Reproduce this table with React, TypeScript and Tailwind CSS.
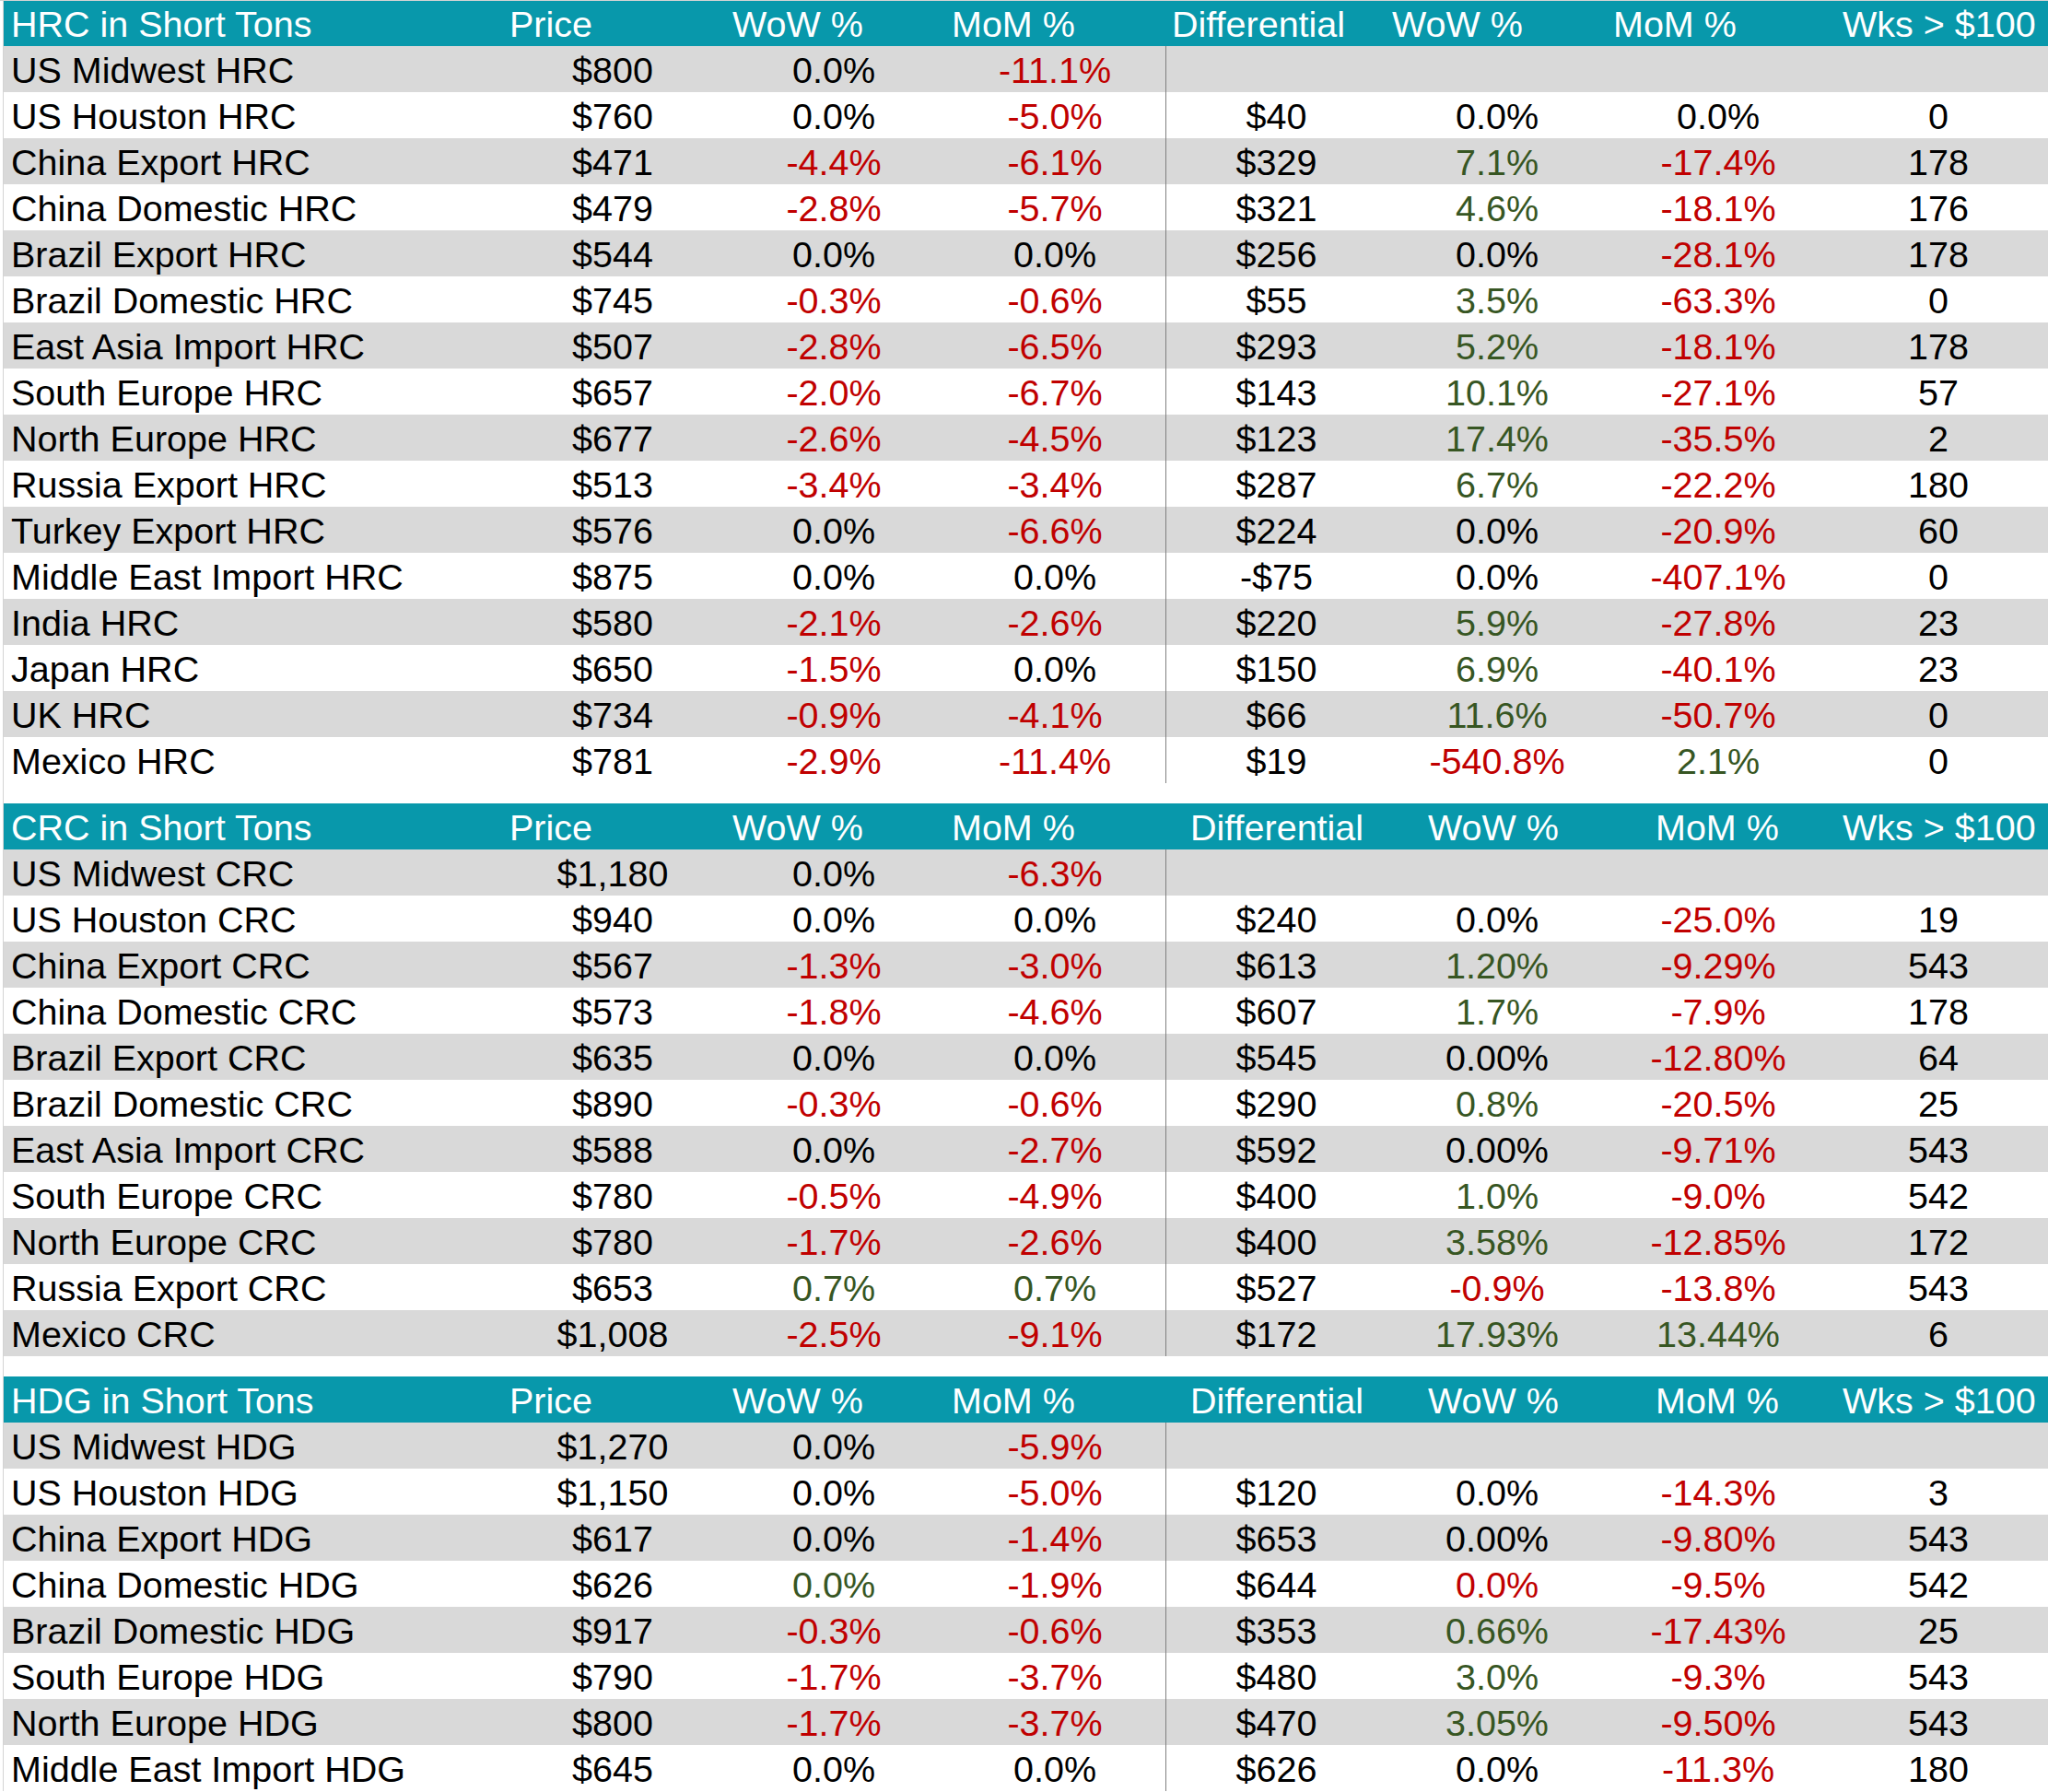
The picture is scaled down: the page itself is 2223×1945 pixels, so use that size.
type Head = { label: string; pad: string };

const COLS = 'grid grid-cols-[541px_240px_240px_240px_240px_240px_240px_238px]';

// r| = red, g| = green, otherwise black
const hrcRows: string[][] = [
  ['US Midwest HRC', '$800', '0.0%', 'r|-11.1%', '', '', '', ''],
  ['US Houston HRC', '$760', '0.0%', 'r|-5.0%', '$40', '0.0%', '0.0%', '0'],
  ['China Export HRC', '$471', 'r|-4.4%', 'r|-6.1%', '$329', 'g|7.1%', 'r|-17.4%', '178'],
  ['China Domestic HRC', '$479', 'r|-2.8%', 'r|-5.7%', '$321', 'g|4.6%', 'r|-18.1%', '176'],
  ['Brazil Export HRC', '$544', '0.0%', '0.0%', '$256', '0.0%', 'r|-28.1%', '178'],
  ['Brazil Domestic HRC', '$745', 'r|-0.3%', 'r|-0.6%', '$55', 'g|3.5%', 'r|-63.3%', '0'],
  ['East Asia Import HRC', '$507', 'r|-2.8%', 'r|-6.5%', '$293', 'g|5.2%', 'r|-18.1%', '178'],
  ['South Europe HRC', '$657', 'r|-2.0%', 'r|-6.7%', '$143', 'g|10.1%', 'r|-27.1%', '57'],
  ['North Europe HRC', '$677', 'r|-2.6%', 'r|-4.5%', '$123', 'g|17.4%', 'r|-35.5%', '2'],
  ['Russia Export HRC', '$513', 'r|-3.4%', 'r|-3.4%', '$287', 'g|6.7%', 'r|-22.2%', '180'],
  ['Turkey Export HRC', '$576', '0.0%', 'r|-6.6%', '$224', '0.0%', 'r|-20.9%', '60'],
  ['Middle East Import HRC', '$875', '0.0%', '0.0%', '-$75', '0.0%', 'r|-407.1%', '0'],
  ['India HRC', '$580', 'r|-2.1%', 'r|-2.6%', '$220', 'g|5.9%', 'r|-27.8%', '23'],
  ['Japan HRC', '$650', 'r|-1.5%', '0.0%', '$150', 'g|6.9%', 'r|-40.1%', '23'],
  ['UK HRC', '$734', 'r|-0.9%', 'r|-4.1%', '$66', 'g|11.6%', 'r|-50.7%', '0'],
  ['Mexico HRC', '$781', 'r|-2.9%', 'r|-11.4%', '$19', 'r|-540.8%', 'g|2.1%', '0'],
];

const crcRows: string[][] = [
  ['US Midwest CRC', '$1,180', '0.0%', 'r|-6.3%', '', '', '', ''],
  ['US Houston CRC', '$940', '0.0%', '0.0%', '$240', '0.0%', 'r|-25.0%', '19'],
  ['China Export CRC', '$567', 'r|-1.3%', 'r|-3.0%', '$613', 'g|1.20%', 'r|-9.29%', '543'],
  ['China Domestic CRC', '$573', 'r|-1.8%', 'r|-4.6%', '$607', 'g|1.7%', 'r|-7.9%', '178'],
  ['Brazil Export CRC', '$635', '0.0%', '0.0%', '$545', '0.00%', 'r|-12.80%', '64'],
  ['Brazil Domestic CRC', '$890', 'r|-0.3%', 'r|-0.6%', '$290', 'g|0.8%', 'r|-20.5%', '25'],
  ['East Asia Import CRC', '$588', '0.0%', 'r|-2.7%', '$592', '0.00%', 'r|-9.71%', '543'],
  ['South Europe CRC', '$780', 'r|-0.5%', 'r|-4.9%', '$400', 'g|1.0%', 'r|-9.0%', '542'],
  ['North Europe CRC', '$780', 'r|-1.7%', 'r|-2.6%', '$400', 'g|3.58%', 'r|-12.85%', '172'],
  ['Russia Export CRC', '$653', 'g|0.7%', 'g|0.7%', '$527', 'r|-0.9%', 'r|-13.8%', '543'],
  ['Mexico CRC', '$1,008', 'r|-2.5%', 'r|-9.1%', '$172', 'g|17.93%', 'g|13.44%', '6'],
];

const hdgRows: string[][] = [
  ['US Midwest HDG', '$1,270', '0.0%', 'r|-5.9%', '', '', '', ''],
  ['US Houston HDG', '$1,150', '0.0%', 'r|-5.0%', '$120', '0.0%', 'r|-14.3%', '3'],
  ['China Export HDG', '$617', '0.0%', 'r|-1.4%', '$653', '0.00%', 'r|-9.80%', '543'],
  ['China Domestic HDG', '$626', 'g|0.0%', 'r|-1.9%', '$644', 'r|0.0%', 'r|-9.5%', '542'],
  ['Brazil Domestic HDG', '$917', 'r|-0.3%', 'r|-0.6%', '$353', 'g|0.66%', 'r|-17.43%', '25'],
  ['South Europe HDG', '$790', 'r|-1.7%', 'r|-3.7%', '$480', 'g|3.0%', 'r|-9.3%', '543'],
  ['North Europe HDG', '$800', 'r|-1.7%', 'r|-3.7%', '$470', 'g|3.05%', 'r|-9.50%', '543'],
  ['Middle East Import HDG', '$645', '0.0%', '0.0%', '$626', '0.0%', 'r|-11.3%', '180'],
];

const hrcHead: Head[] = [
  { label: 'HRC in Short Tons', pad: 'pl-[8px]' },
  { label: 'Price', pad: 'pl-[8px]' },
  { label: 'WoW %', pad: 'pl-[10px]' },
  { label: 'MoM %', pad: 'pl-[8px]' },
  { label: 'Differential', pad: 'pl-[7px]' },
  { label: 'WoW %', pad: 'pl-[6px]' },
  { label: 'MoM %', pad: 'pl-[6px]' },
  { label: 'Wks > $100', pad: 'pl-[15px]' },
];

const lowerHead = (name: string): Head[] => [
  { label: `${name} in Short Tons`, pad: 'pl-[8px]' },
  { label: 'Price', pad: 'pl-[8px]' },
  { label: 'WoW %', pad: 'pl-[10px]' },
  { label: 'MoM %', pad: 'pl-[8px]' },
  { label: 'Differential', pad: 'pl-[27px]' },
  { label: 'WoW %', pad: 'pl-[45px]' },
  { label: 'MoM %', pad: 'pl-[52px]' },
  { label: 'Wks > $100', pad: 'pl-[15px]' },
];

const tone = (raw: string) =>
  raw.startsWith('r|') ? 'text-[#c00000]' : raw.startsWith('g|') ? 'text-[#375623]' : 'text-black';

const PriceTable = ({ head, rows, first }: { head: Head[]; rows: string[][]; first?: boolean }) => (
  <section>
    <div
      className={`${COLS} bg-[#0898ab] text-white ${first ? 'h-[49px] pt-[2px]' : 'h-[50px] pt-[3px]'}`}
    >
      {head.map((h, i) => (
        <div key={i} className={`${h.pad} leading-[47px] whitespace-nowrap overflow-hidden`}>
          {h.label}
        </div>
      ))}
    </div>
    {rows.map((row, r) => (
      <div key={r} className={`${COLS} h-[50px] ${r % 2 === 0 ? 'bg-[#d9d9d9]' : 'bg-white'}`}>
        <div className="pl-[8px] pt-[3px] leading-[47px] whitespace-nowrap text-black">{row[0]}</div>
        {row.slice(1).map((raw, c) => (
          <div
            key={c}
            className={`pt-[3px] leading-[47px] text-center whitespace-nowrap ${tone(raw)} ${
              c === 3 ? 'border-l border-[#808080]' : ''
            }`}
          >
            {raw.replace(/^[rg]\|/, '')}
          </div>
        ))}
      </div>
    ))}
  </section>
);

export default function App() {
  return (
    <div className="w-[2223px] min-h-[1945px] bg-white border-t border-[#d4d4d4] pl-[3px] font-['Liberation_Sans',Arial,sans-serif] text-[39.5px]">
      <div className="border-l border-[#d4d4d4]">
        <PriceTable head={hrcHead} rows={hrcRows} first />
        <div className="h-[22px]" />
        <PriceTable head={lowerHead('CRC')} rows={crcRows} />
        <div className="h-[22px]" />
        <PriceTable head={lowerHead('HDG')} rows={hdgRows} />
      </div>
    </div>
  );
}
